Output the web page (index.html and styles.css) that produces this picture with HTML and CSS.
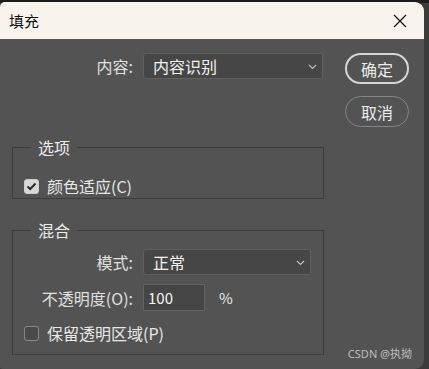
FILE: index.html
```html
<!DOCTYPE html>
<html lang="zh-CN">
<head>
    <meta charset="UTF-8">
    <meta name="viewport" content="width=device-width, initial-scale=1.0">
    <title>填充</title>
    <link rel="stylesheet" href="styles.css">
</head>
<body>
    <div class="dialog">
        <div class="titlebar">
            <span class="title">填充</span>
            <svg class="close" width="14" height="14" viewBox="0 0 14 14">
                <path d="M1 1 L13 13 M13 1 L1 13" stroke="#1a1a1a" stroke-width="1.3" fill="none"/>
            </svg>
        </div>
        <div class="content">
            <div class="form">
                <div class="row top-row">
                    <span class="label label-top">内容:</span>
                    <div class="select select-wide">
                        <span>内容识别</span>
                        <svg class="chevron" width="9" height="6" viewBox="0 0 9 6"><path d="M1 1 L4.5 4.5 L8 1" stroke="#bdbdbd" stroke-width="1.2" fill="none"/></svg>
                    </div>
                </div>

                <fieldset class="group group-options">
                    <legend>选项</legend>
                    <div class="check-row">
                        <span class="checkbox checked">
                            <svg width="11" height="9" viewBox="0 0 11 9"><path d="M1.5 4.5 L4.2 7 L9.5 1.5" stroke="#2a2a2a" stroke-width="2" fill="none"/></svg>
                        </span>
                        <span>颜色适应(C)</span>
                    </div>
                </fieldset>

                <fieldset class="group group-blend">
                    <legend>混合</legend>
                    <div class="row mode-row">
                        <span class="label">模式:</span>
                        <div class="select select-mode">
                            <span>正常</span>
                            <svg class="chevron" width="9" height="6" viewBox="0 0 9 6"><path d="M1 1 L4.5 4.5 L8 1" stroke="#bdbdbd" stroke-width="1.2" fill="none"/></svg>
                        </div>
                    </div>
                    <div class="row opacity-row">
                        <span class="label">不透明度(O):</span>
                        <div class="number-input">100</div>
                        <span class="unit">%</span>
                    </div>
                    <div class="check-row keep-row">
                        <span class="checkbox"></span>
                        <span>保留透明区域(P)</span>
                    </div>
                </fieldset>
            </div>
            <div class="actions">
                <button class="btn btn-primary">确定</button>
                <button class="btn">取消</button>
            </div>
        </div>
        <div class="watermark">CSDN @执拗</div>
    </div>
</body>
</html>
```

FILE: styles.css
```css
body {
    margin: 0;
    background: linear-gradient(#1c1c1c 0 3px, #3b3b3b 3px);
    font-family: "Noto Sans CJK SC", "Noto Sans", sans-serif;
    width: 429px;
    height: 369px;
    overflow: hidden;
}
.dialog {
    position: relative;
    width: 424px;
    height: 367px;
    margin-top: 2px;
    background-color: #535353;
    border-radius: 5px 9px 9px 3px;
    overflow: hidden;
    color: #e8e8e8;
}
.titlebar {
    height: 37px;
    background-color: #f8f3ed;
    display: flex;
    align-items: center;
    justify-content: space-between;
    padding: 0 17px 0 9px;
}
.title {
    font-size: 15px;
    color: #111;
}
.content {
    display: flex;
    padding: 14px 0 0 12px;
}
.form {
    width: 312px;
}
.row {
    display: flex;
    align-items: center;
    font-size: 16px;
}
.label {
    width: 109px;
    text-align: right;
    margin-right: 10px;
    color: #e0e0e0;
}
.label-top {
    width: 121px;
}
.select {
    height: 26px;
    box-sizing: border-box;
    background-color: #464646;
    border: 1px solid #606060;
    border-radius: 3px;
    display: flex;
    align-items: center;
    justify-content: space-between;
    padding: 0 5px 0 9px;
    color: #f2f2f2;
    font-size: 16px;
}
.select-wide {
    width: 180px;
}
.select-mode {
    width: 168px;
}
.chevron {
    margin-top: 2px;
}
.group {
    margin: 0;
    padding: 0 11px;
    border: 1px solid #3c3c3c;
    min-width: 0;
}
.group legend {
    margin-left: 7px;
    padding: 0 7px;
    font-size: 16px;
    line-height: 22px;
    color: #ececec;
}
.group-options {
    margin-top: 57px;
    height: 63px;
    box-sizing: border-box;
}
.group-blend {
    margin-top: 20px;
    height: 136px;
    box-sizing: border-box;
}
.check-row {
    display: flex;
    align-items: center;
    gap: 8px;
    font-size: 16px;
    height: 22px;
}
.group-options .check-row {
    margin-top: 17px;
}
.checkbox {
    width: 15px;
    height: 15px;
    box-sizing: border-box;
    border: 1px solid #888;
    border-radius: 3px;
    background-color: #4a4a4a;
    display: flex;
    align-items: center;
    justify-content: center;
}
.checkbox.checked {
    background-color: #d8d8d8;
    border-color: #cfcfcf;
}
.mode-row {
    margin-top: 8px;
}
.opacity-row {
    margin-top: 9px;
}
.number-input {
    width: 62px;
    height: 27px;
    box-sizing: border-box;
    background-color: #454545;
    border: 1px solid #626262;
    padding-left: 4px;
    line-height: 25px;
    font-size: 15px;
    color: #f4f4f4;
}
.unit {
    margin-left: 14px;
    font-size: 15px;
}
.keep-row {
    margin-top: 11px;
}
.actions {
    margin-left: 21px;
    display: flex;
    flex-direction: column;
    gap: 12px;
}
.btn {
    width: 64px;
    height: 31px;
    background: transparent;
    border: 1px solid #858585;
    border-radius: 16px;
    color: #ececec;
    font-family: inherit;
    font-size: 16px;
    padding: 0;
}
.btn-primary {
    border: 2px solid #d6d6d6;
}
.watermark {
    position: absolute;
    right: 12px;
    bottom: 8px;
    font-size: 11px;
    color: #bdbdbd;
    font-family: "Noto Sans", "Noto Sans CJK SC", sans-serif;
}
```
